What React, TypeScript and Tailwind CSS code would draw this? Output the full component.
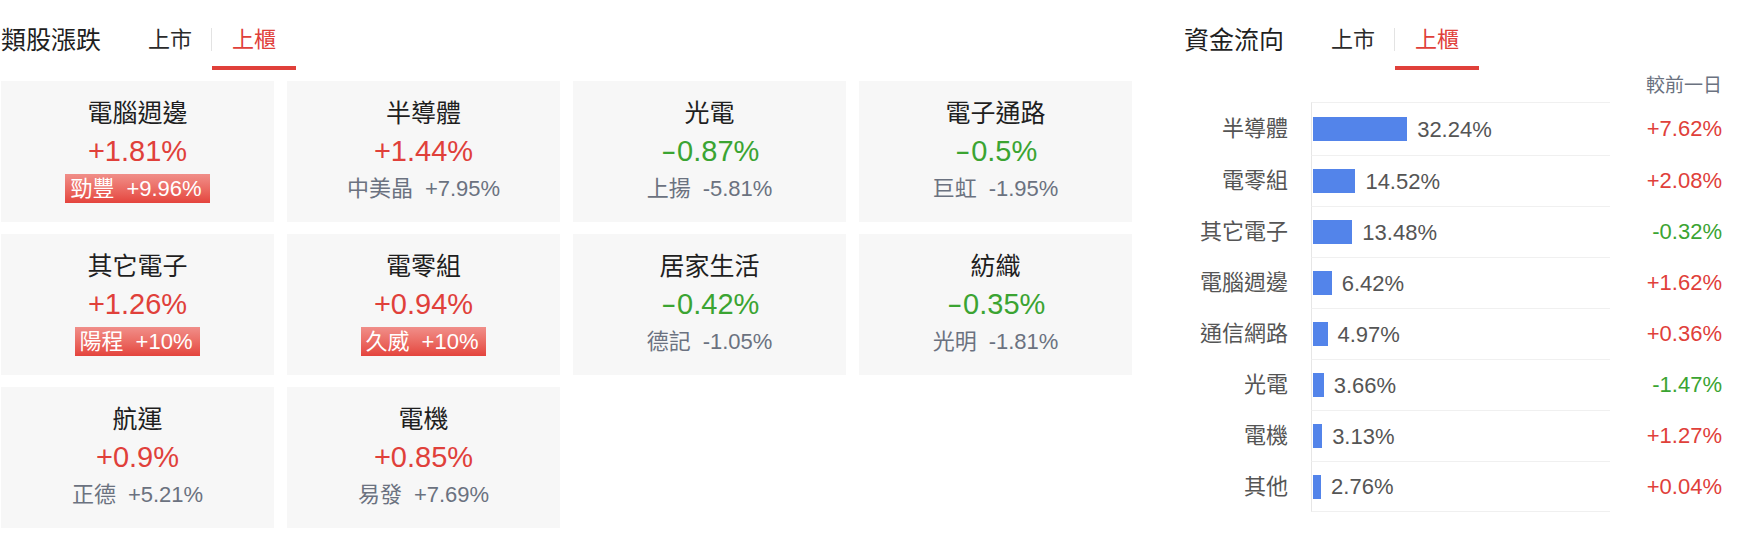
type Sector = {
  name: string
  change: string
  stock: string
  stockChange: string
  limitUp?: boolean
}

type Flow = {
  name: string
  share: number
  diff: string
}

const sectors: Sector[] = [
  { name: "電腦週邊", change: "+1.81%", stock: "勁豐", stockChange: "+9.96%", limitUp: true },
  { name: "半導體", change: "+1.44%", stock: "中美晶", stockChange: "+7.95%" },
  { name: "光電", change: "-0.87%", stock: "上揚", stockChange: "-5.81%" },
  { name: "電子通路", change: "-0.5%", stock: "巨虹", stockChange: "-1.95%" },
  { name: "其它電子", change: "+1.26%", stock: "陽程", stockChange: "+10%", limitUp: true },
  { name: "電零組", change: "+0.94%", stock: "久威", stockChange: "+10%", limitUp: true },
  { name: "居家生活", change: "-0.42%", stock: "德記", stockChange: "-1.05%" },
  { name: "紡織", change: "-0.35%", stock: "光明", stockChange: "-1.81%" },
  { name: "航運", change: "+0.9%", stock: "正德", stockChange: "+5.21%" },
  { name: "電機", change: "+0.85%", stock: "易發", stockChange: "+7.69%" },
]

const flows: Flow[] = [
  { name: "半導體", share: 32.24, diff: "+7.62%" },
  { name: "電零組", share: 14.52, diff: "+2.08%" },
  { name: "其它電子", share: 13.48, diff: "-0.32%" },
  { name: "電腦週邊", share: 6.42, diff: "+1.62%" },
  { name: "通信網路", share: 4.97, diff: "+0.36%" },
  { name: "光電", share: 3.66, diff: "-1.47%" },
  { name: "電機", share: 3.13, diff: "+1.27%" },
  { name: "其他", share: 2.76, diff: "+0.04%" },
]

const tone = (v: string) => (v.startsWith("-") ? "text-[#3ba432]" : "text-[#e0403a]")

// big change figure; the minus gets a wider, longer dash like the plus
function BigPct({ value }: { value: string }) {
  if (!value.startsWith("-")) return <>{value}</>
  return (
    <>
      <span className="inline-block w-[0.6em] text-center">
        <span className="inline-block scale-x-[1.6]">-</span>
      </span>
      {value.slice(1)}
    </>
  )
}

function Header({ title }: { title: string }) {
  return (
    <div className="flex items-start pt-[22px]">
      <h2 className="text-[25px] leading-[36px] font-normal text-[#1f1f1f]">{title}</h2>
      <div className="ml-[27px] flex items-start">
        <button className="pl-5 pr-[19px] pb-[8px] border-b-4 border-transparent text-[22px] leading-[36px] text-[#2b2b2b]">
          上市
        </button>
        <div className="mt-[6px] h-[23px] w-px bg-[#e3e3e3]" />
        <button className="px-5 pb-[8px] border-b-4 border-[#e0403a] text-[22px] leading-[36px] text-[#e0403a]">
          上櫃
        </button>
      </div>
    </div>
  )
}

function SectorCard({ s }: { s: Sector }) {
  return (
    <div className="h-[141px] bg-[#f7f7f7] flex flex-col items-center pt-[14px]">
      <div className="text-[25px] leading-[36px] text-[#1f1f1f]">{s.name}</div>
      <div className={`text-[29px] leading-[40px] ${tone(s.change)}`}>
        <BigPct value={s.change} />
      </div>
      {s.limitUp ? (
        <div className="mt-[3px] h-[29px] flex items-center pl-[5px] pr-[8px] bg-linear-to-b from-[#f08e89] to-[#e4433d] text-white text-[22px] leading-[29px]">
          <span>{s.stock}</span>
          <span className="ml-3">{s.stockChange}</span>
        </div>
      ) : (
        <div className="mt-[3px] h-[29px] flex items-center text-[#6b7280] text-[22px] leading-[29px]">
          <span>{s.stock}</span>
          <span className="ml-3">{s.stockChange}</span>
        </div>
      )}
    </div>
  )
}

export default function App() {
  return (
    <div className="w-[1742px] h-[536px] overflow-hidden bg-white flex justify-between pl-px pr-[20px] font-['Liberation_Sans','Noto_Sans_CJK_TC',sans-serif]">
      {/* 類股漲跌 */}
      <section className="w-[1131px]">
        <Header title="類股漲跌" />
        <div className="mt-[11px] grid grid-cols-[repeat(4,273px)] gap-x-[13px] gap-y-[12px]">
          {sectors.map((s) => (
            <SectorCard key={s.name} s={s} />
          ))}
        </div>
      </section>

      {/* 資金流向 */}
      <section className="w-[538px] flex flex-col">
        <Header title="資金流向" />
        <div className="h-[32px] text-right text-[19px] leading-[32px] text-[#6b7280]">較前一日</div>
        <div className="flex flex-col">
          {flows.map((f, i) => (
            <div key={f.name} className={`flex items-stretch ${i === 0 ? "h-[53px]" : "h-[51px]"}`}>
              <div className="w-[127px] pr-[23px] flex items-center justify-end text-[22px] text-[#555]">
                {f.name}
              </div>
              <div
                className={`w-[299px] flex items-center pl-px border-l border-l-[#e6e6e6] border-t border-t-[#f0f0f0] ${
                  i === flows.length - 1 ? "border-b border-b-[#f0f0f0]" : ""
                }`}
              >
                <div className="h-[24px] bg-[#5384ea]" style={{ width: `${f.share * 2.92}px` }} />
                <span className="ml-[10px] text-[22px] text-[#555]">{f.share.toFixed(2)}%</span>
              </div>
              <div className={`flex-1 flex items-center justify-end text-[22px] ${tone(f.diff)}`}>{f.diff}</div>
            </div>
          ))}
        </div>
      </section>
    </div>
  )
}
